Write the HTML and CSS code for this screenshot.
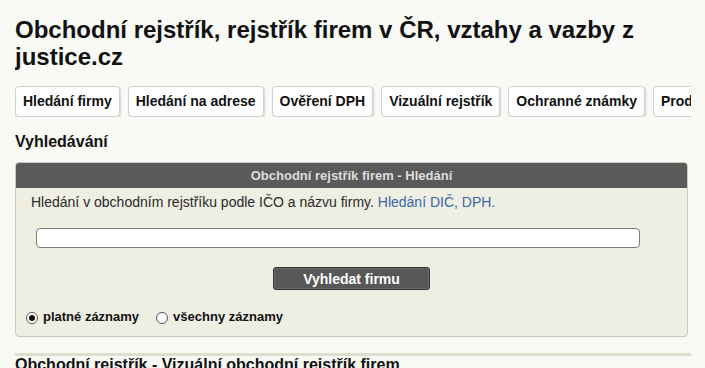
FILE: index.html
```html
<!DOCTYPE html>
<html lang="cs">
<head>
  <meta charset="UTF-8" />
  <meta name="viewport" content="width=device-width, initial-scale=1.0"/>
  <title>Obchodní rejstřík firem</title>
  <link rel="stylesheet" href="styles.css">
</head>
<body>
  <div class="page">
    <h1>Obchodní rejstřík, rejstřík firem v ČR, vztahy a vazby z justice.cz</h1>

    <nav class="tabs">
      <a href="#" class="tab">Hledání firmy</a>
      <a href="#" class="tab">Hledání na adrese</a>
      <a href="#" class="tab">Ověření DPH</a>
      <a href="#" class="tab">Vizuální rejstřík</a>
      <a href="#" class="tab">Ochranné známky</a>
      <a href="#" class="tab">Produkty</a>
    </nav>

    <h2 class="section-title">Vyhledávání</h2>

    <form class="panel" onsubmit="return false">
      <div class="panel-head">Obchodní rejstřík firem - Hledání</div>
      <div class="panel-body">
        <p class="intro">Hledání v obchodním rejstříku podle IČO a názvu firmy. <a href="#">Hledání DIČ, DPH.</a></p>
        <input type="text" class="query" name="q">
        <div class="actions">
          <button type="submit" class="btn">Vyhledat firmu</button>
        </div>
        <div class="filters">
          <label><input type="radio" name="scope" checked> platné záznamy</label>
          <label><input type="radio" name="scope"> všechny záznamy</label>
        </div>
      </div>
    </form>

    <h2 class="next-title">Obchodní rejstřík - Vizuální obchodní rejstřík firem</h2>
  </div>
</body>
</html>
```

FILE: styles.css
```css
/* Reset & base */
* { box-sizing: border-box; margin: 0; padding: 0; }
body { font-family: "Liberation Sans", Arial, sans-serif; background: #f9f9f5; color: #111; }

.page { margin: 0 14px 0 15px; overflow: hidden; }

h1 { font-size: 24px; line-height: 27px; font-weight: bold; margin-top: 16px; color: #111; }

/* Tabs row, clipped at the right edge */
.tabs { display: flex; gap: 8px; margin-top: 16px; overflow: hidden; white-space: nowrap; }
.tab {
  flex: none;
  display: block;
  height: 31px; line-height: 29px;
  padding: 0 7px;
  background: #fff;
  border: 1px solid #cfcfcf;
  border-radius: 4px;
  box-shadow: 1px 1px 2px rgba(0,0,0,0.15);
  color: #111; text-decoration: none;
  font-size: 14px; font-weight: bold;
}

.section-title { font-size: 16px; line-height: 18px; margin-top: 16px; }

/* Search panel */
.panel {
  display: block;
  margin: 11px 3px 0 0;
  border: 1px solid #c9c9c0;
  border-radius: 4px;
  overflow: hidden;
  background: #eeeee3;
}
.panel-head {
  height: 25px; line-height: 25px;
  background: #5a5a5a;
  color: #dedede;
  text-align: center;
  font-size: 13px; font-weight: bold;
}
.panel-body { padding: 6px 15px 11px; }
.intro { font-size: 14px; line-height: 16px; color: #2a2a2a; }
.intro a { color: #3b68a6; text-decoration: none; }

.query {
  display: block;
  width: 604px; height: 20px;
  margin: 18px 0 0 5px;
  border: 1px solid #7a7a7a;
  border-radius: 4px;
  background: #fff;
}

.actions { display: flex; justify-content: center; margin-top: 19px; }
.btn {
  width: 157px; height: 23px;
  background: #575757;
  border: 1px solid #333;
  box-shadow: inset 0 0 0 1px #6a6a6a;
  border-radius: 3px;
  color: #fff;
  font-family: "Liberation Sans", Arial, sans-serif;
  font-size: 14px; font-weight: bold;
  cursor: pointer;
}

.filters { display: flex; gap: 17px; margin: 19px 0 0 -5px; }
.filters label { display: flex; align-items: center; gap: 5px; font-size: 13px; line-height: 16px; font-weight: bold; color: #111; }
.filters input {
  appearance: none;
  width: 12px; height: 12px;
  border: 1px solid #555;
  border-radius: 50%;
  background: #fff;
  display: grid; place-items: center;
  margin-top: 1px;
}
.filters input:checked::before {
  content: '';
  width: 6px; height: 6px;
  border-radius: 50%;
  background: #111;
}

.next-title {
  margin-top: 16px;
  border-top: 3px solid #dedecf;
  font-size: 16px; line-height: 18px;
}
```
